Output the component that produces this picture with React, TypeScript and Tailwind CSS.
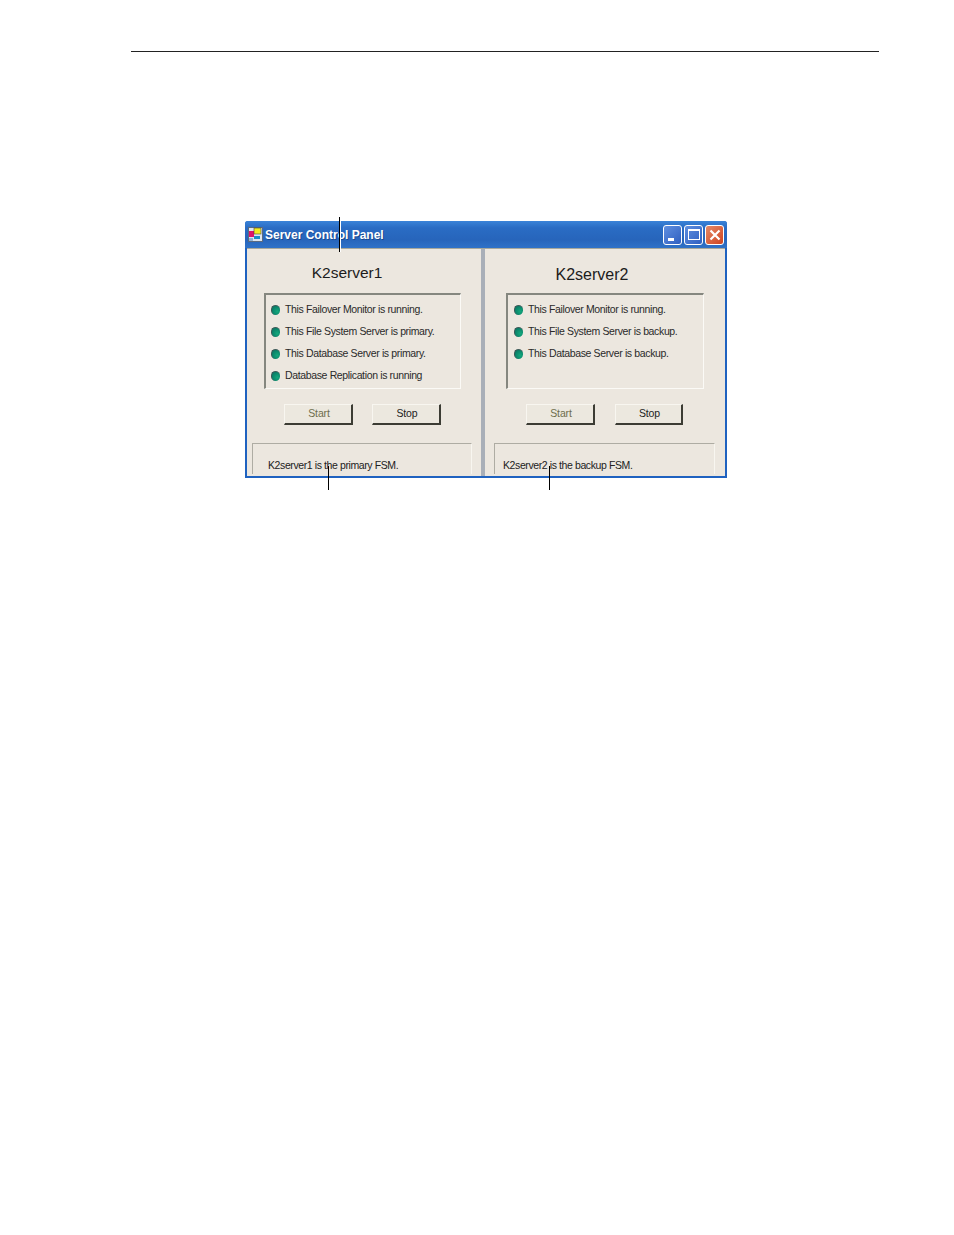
import React from "react";

const font = "font-['Liberation_Sans',Arial,sans-serif]";

const Led: React.FC = () => (
  <span className="block w-[9px] h-[10px] shrink-0 rounded-full border-l border-t border-[#3d5a58] bg-[radial-gradient(circle_at_65%_60%,#12a87c,#0b7f68_70%)]" />
);

const StatusRow: React.FC<{ text: string }> = ({ text }) => (
  <div className="flex items-center h-[22px] gap-[5px]">
    <Led />
    <span className="text-[10.5px] tracking-[-0.36px] text-[#2a2a2a] whitespace-nowrap">{text}</span>
  </div>
);

const XpButton: React.FC<{ label: string; disabled?: boolean; width: string }> = ({ label, disabled, width }) => (
  <div
    className={`${width} h-[21px] pl-[2px] flex items-center justify-center text-[10.5px] tracking-[-0.1px] bg-[#ece8df] border-r-2 border-b-2 border-r-[#3c3c34] border-b-[#3c3c34] border-t border-l border-t-[#f8f6f0] border-l-[#f8f6f0] ${
      disabled ? "text-[#6e6e4c]" : "text-[#222]"
    }`}
  >
    {label}
  </div>
);

const ServerPane: React.FC<{
  name: string;
  rows: string[];
  footer: string;
  width: string;
  titleClass: string;
  boxClass: string;
  buttonRow: string;
  footerBox: string;
  footerText: string;
  stopWidth: string;
}> = ({ name, rows, footer, width, titleClass, boxClass, buttonRow, footerBox, footerText, stopWidth }) => (
  <div className={`${width} h-full shrink-0 overflow-hidden bg-[#ece7df]`}>
    <div className={`leading-[18px] text-[#1c1c1c] text-center ${titleClass}`}>{name}</div>
    <div
      className={`${boxClass} h-[96px] pt-[4px] border-t-2 border-l-2 border-r border-b border-t-[#85877f] border-l-[#85877f] border-r-[#fbfaf6] border-b-[#fbfaf6]`}
    >
      {rows.map((r) => (
        <StatusRow key={r} text={r} />
      ))}
    </div>
    <div className={`flex mt-[15px] ${buttonRow}`}>
      <XpButton label="Start" disabled width="w-[69px]" />
      <XpButton label="Stop" width={stopWidth} />
    </div>
    <div className={`${footerBox} mt-[18px] h-[31px] border-t border-l border-r border-[#aeaca3] border-r-[#f8f6f0]`}>
      <div className={`${footerText} pt-[15px] text-[10.5px] tracking-[-0.4px] leading-[13px] text-[#222] whitespace-nowrap`}>
        {footer}
      </div>
    </div>
  </div>
);

const Callout: React.FC<{ className: string }> = ({ className }) => (
  <div className={`absolute w-px bg-black ${className}`} />
);

export default function App() {
  return (
    <div className={`relative w-[954px] h-[1235px] bg-white overflow-hidden pt-[51px] ${font}`}>
      <div className="ml-[131px] w-[748px] h-px bg-[#222]" />

      <div className="relative ml-[245px] mt-[169px] w-[482px] h-[257px] flex flex-col overflow-hidden rounded-t-[3px] bg-[#1f62c0]">
        <div className="h-[27px] shrink-0 flex items-center pl-[3px] pr-[2px] bg-[linear-gradient(180deg,#3a83d8_0%,#2a6cc4_25%,#2765bb_70%,#2f72c8_100%)]">
          <svg width="15" height="15" viewBox="0 0 15 15" className="shrink-0">
            <rect x="0.5" y="0.5" width="14" height="14" fill="#dfe6ee" stroke="#5a6a80" />
            <rect x="1" y="4" width="5" height="6" fill="#e0156a" />
            <rect x="6" y="1" width="7" height="6" fill="#f6ee1c" stroke="#444" strokeWidth="0.6" />
            <rect x="6" y="9" width="6" height="3" fill="#1c8fc8" />
            <rect x="1" y="11" width="4" height="3" fill="#8fb4d8" />
          </svg>
          <span className="ml-[2px] text-[12px] font-bold text-white [text-shadow:1px_1px_0_#1a4a90] whitespace-nowrap">
            Server Control Panel
          </span>
          <div className="ml-auto flex gap-[2px] mr-[1px]">
            <div className="w-[19px] h-[20px] rounded-[3px] border border-white bg-[linear-gradient(135deg,#5f8fe0,#2f5fc0)] flex items-end pl-[4px] pb-[3px]">
              <span className="block w-[6px] h-[3px] bg-white" />
            </div>
            <div className="w-[19px] h-[20px] rounded-[3px] border border-white bg-[linear-gradient(135deg,#5f8fe0,#2f5fc0)] flex items-center justify-center">
              <span className="block w-[12px] h-[11px] border border-t-2 border-white" />
            </div>
            <div className="w-[19px] h-[20px] rounded-[3px] border border-white bg-[linear-gradient(135deg,#e58a68,#cf4420)] flex items-center justify-center">
              <svg width="12" height="12" viewBox="0 0 12 12">
                <path d="M1.5 1.5 L10.5 10.5 M10.5 1.5 L1.5 10.5" stroke="#fff" strokeWidth="2.2" />
              </svg>
            </div>
          </div>
        </div>

        <div className="flex flex-1 min-h-0 mx-[2px] mb-[2px] border-t border-[#a8a89c]">
          <ServerPane
            name="K2server1"
            rows={[
              "This Failover Monitor is running.",
              "This File System Server is primary.",
              "This Database Server is primary.",
              "Database Replication is running",
            ]}
            footer="K2server1 is the primary FSM."
            width="w-[234px]"
            titleClass="text-[15.5px] pt-[15px] pb-[11px] -ml-[2px] w-[204px]"
            boxClass="ml-[17px] w-[197px] pl-[5px]"
            buttonRow="ml-[37px] gap-[19px]"
            footerBox="ml-[5px] w-[220px]"
            footerText="pl-[15px]"
            stopWidth="w-[69px]"
          />
          <div className="w-[4px] shrink-0 bg-[#a9afb8]" />
          <ServerPane
            name="K2server2"
            rows={[
              "This Failover Monitor is running.",
              "This File System Server is backup.",
              "This Database Server is backup.",
            ]}
            footer="K2server2 is the backup FSM."
            width="flex-1"
            titleClass="text-[16px] pt-[17px] pb-[9px] w-[214px]"
            boxClass="ml-[21px] w-[198px] pl-[6px]"
            buttonRow="ml-[41px] gap-[20px]"
            footerBox="ml-[9px] w-[221px]"
            footerText="pl-[8px]"
            stopWidth="w-[68px]"
          />
        </div>
      </div>

      {/* callout leader lines */}
      <Callout className="left-[339px] top-[217px] h-[35px] shadow-[1px_0_0_#fff]" />
      <Callout className="left-[328px] top-[466px] h-[24px]" />
      <Callout className="left-[549px] top-[466px] h-[24px]" />
    </div>
  );
}
